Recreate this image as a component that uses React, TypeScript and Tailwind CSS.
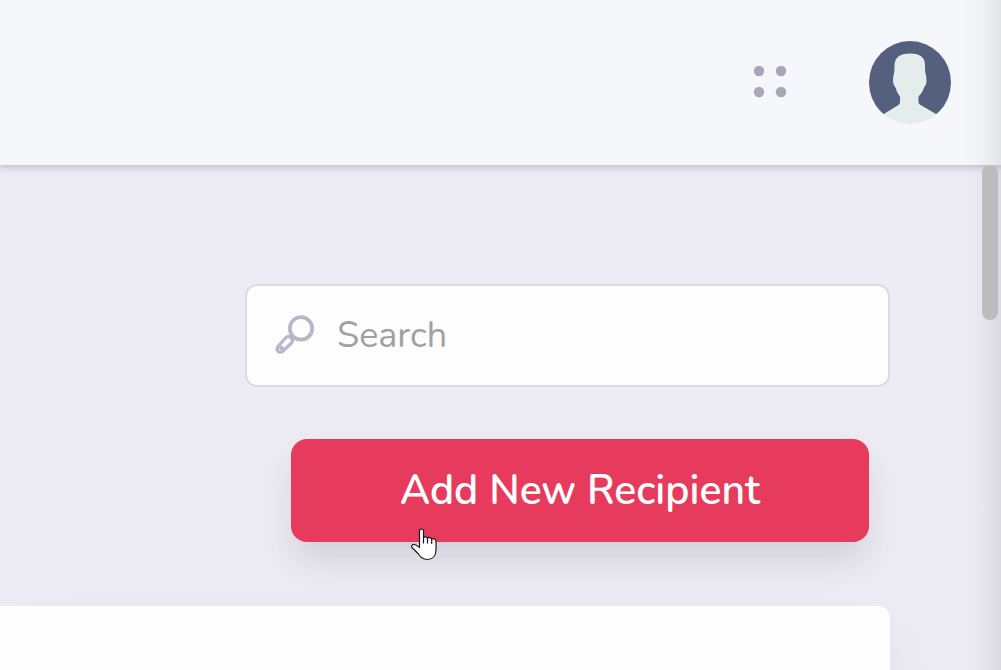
import React from "react";

function AppsIcon() {
  return (
    <svg viewBox="0 0 34 34" className="size-[34px]" fill="#a7a7b8" aria-hidden="true">
      <circle cx="6" cy="5" r="5.200" />
      <circle cx="28" cy="5" r="5.200" />
      <circle cx="6" cy="26" r="5.200" />
      <circle cx="28" cy="26" r="5.200" />
    </svg>
  );
}

function Avatar() {
  return (
    <svg viewBox="0 0 82 83" className="h-[83px] w-[82px]" aria-hidden="true">
      <defs>
        <clipPath id="avatar-clip">
          <ellipse cx="41" cy="41.5" rx="41" ry="41.5" />
        </clipPath>
      </defs>
      <g clipPath="url(#avatar-clip)">
        <path d="M0 0 H82 V73.500 H0 Z" fill="#555f7e" />
        <path
          d="M14 73.500 L29.500 64 Q31 63 31 61 L31 55.500 C29 53 27.500 50 26.500 46.500 C24.500 44 24 42 24 39 L24.500 34 Q25.500 33 25.500 24 C26 15.500 32 12.500 41 12.500 C50 12.500 56 15.500 56 24 Q56 33 57 34 L57.500 39 C57.500 42 57 44 55 46.500 C54 50 52 53 49.500 55.500 L49.500 61 Q49.500 63 51.500 64 L68 73.500 L82 83 L0 83 Z"
          fill="#e5ecec"
        />
      </g>
    </svg>
  );
}

function SearchIcon() {
  return (
    <svg viewBox="0 0 42 42" className="size-[42px] shrink-0" fill="none" stroke="#b7b7ca" aria-hidden="true">
      <circle cx="28" cy="13.400" r="11.200" strokeWidth="3.800" />
      <path d="M17 24 L20.500 20.500" strokeWidth="4" />
      <path
        d="M13 22.500 L5.300 31 C2 35 6.500 39.500 10 36 L18.500 28 C21.500 24.500 16.500 19.500 13 22.500 Z"
        strokeWidth="3.200"
        strokeLinejoin="round"
      />
      <path d="M7 34.500 L10 31.500" strokeWidth="4" />
    </svg>
  );
}

function HandPointer() {
  return (
    <svg
      viewBox="0 0 26 33"
      className="pointer-events-none absolute left-[120px] top-[89px] h-[33px] w-[26px]"
      fill="white"
      stroke="#17171f"
      strokeWidth="1.200"
      strokeLinejoin="round"
      strokeLinecap="round"
      aria-hidden="true"
    >
      <path d="M8.500 19.500 L8.500 3 C8.500 0.300 12.500 0.300 12.500 3 L12.500 9.500 C13.500 8.300 16 8.700 16.500 10 C18 9 20.200 9.500 20.700 11 C22.500 10.200 25 11 25 13.500 L25 21.500 C25 28 21.500 31.500 16.500 31.500 C11.500 31.500 9.500 29 7 25.500 L1 19.500 C0 17.500 1.500 16 3.500 16.500 C5.500 17 7 18.500 8.500 19.500 Z" />
      <path d="M12.500 9.500 V15 M16.500 10 V15 M20.700 11 V15.500" />
    </svg>
  );
}

export default function App() {
  return (
    <div className="relative flex min-h-screen flex-col overflow-hidden bg-[#edebf4] font-['Nunito','Lato',sans-serif]">
      <header className="z-10 flex h-[165px] shrink-0 items-center justify-end gap-[82px] bg-[#f5f7fb] pr-[50px] shadow-[0_1px_8px_1px_rgba(0,0,0,0.22)]">
        <button type="button" aria-label="Apps">
          <AppsIcon />
        </button>
        <button type="button" aria-label="Account">
          <Avatar />
        </button>
      </header>

      <div className="flex flex-1">
        <main className="flex min-w-0 flex-1 flex-col items-end pr-[92px] pt-[119px]">
          <label className="flex h-[103px] w-full max-w-[645px] items-center gap-[22px] rounded-xl border-2 border-[#dcdbe3] bg-[#fdfdfe] px-[26px]">
            <SearchIcon />
            <input
              type="search"
              aria-label="Search"
              placeholder="Search"
              className="min-w-0 flex-1 bg-transparent text-4xl text-gray-700 outline-none placeholder:text-[#a1a1a1]"
            />
          </label>

          <div className="relative mr-[21px] mt-[52px] w-full max-w-[578px]">
            <button
              type="button"
              className="h-[103px] w-full cursor-pointer rounded-2xl bg-[#e63b5c] text-[41px] font-semibold text-white shadow-[0_20px_36px_-4px_rgba(70,70,70,0.18)]"
            >
              Add New Recipient
            </button>
            <HandPointer />
          </div>

          <section
            aria-label="Recipients"
            className="z-10 mt-16 w-full flex-1 rounded-tr-xl bg-[#fdfdfd] shadow-[0_30px_60px_rgba(70,70,70,0.08)]"
          />
        </main>
        <div className="z-20 w-[19px] shrink-0 pr-[3px]">
          <div className="h-[155px] rounded-full bg-[#bcbbc0]" />
        </div>
      </div>

      <div className="pointer-events-none absolute inset-y-0 right-0 z-10 w-10 bg-linear-to-r from-transparent via-black/2 to-black/8" />
    </div>
  );
}
